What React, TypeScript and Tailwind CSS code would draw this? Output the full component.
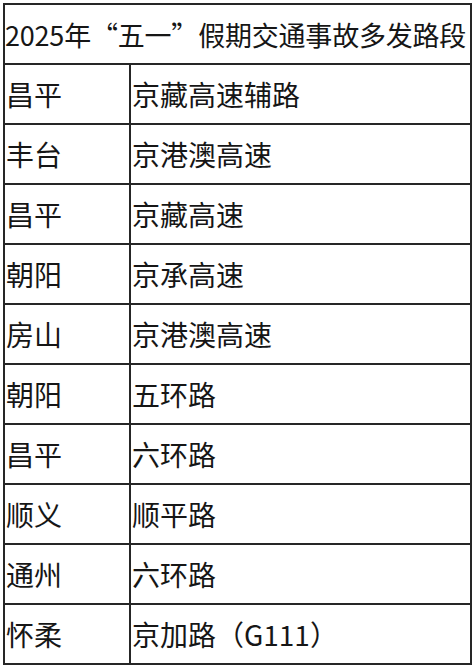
import React from "react";

const rows: [string, string][] = [
  ["昌平", "京藏高速辅路"],
  ["丰台", "京港澳高速"],
  ["昌平", "京藏高速"],
  ["朝阳", "京承高速"],
  ["房山", "京港澳高速"],
  ["朝阳", "五环路"],
  ["昌平", "六环路"],
  ["顺义", "顺平路"],
  ["通州", "六环路"],
  ["怀柔", "京加路（G111）"],
];

export default function App() {
  return (
    <div
      className="w-[476px] h-[666px] bg-white pt-[3px] pl-[3px] text-[#161616]"
      style={{ fontFamily: '"Noto Sans CJK SC", "Noto Sans", sans-serif' }}
    >
      <table className="w-[469px] border-collapse border-2 border-[#262626]">
        <thead>
          <tr className="h-[60px]">
            <th
              colSpan={2}
              className="border-2 border-[#262626] pl-0 text-left font-normal text-[27px] leading-none whitespace-nowrap tracking-[-0.2px]"
            >
              2025年“五一”假期交通事故多发路段
            </th>
          </tr>
        </thead>
        <tbody>
          {rows.map(([district, road], i) => (
            <tr key={i} className="h-[60px]">
              <td className="w-[126px] border-2 border-[#262626] pl-[1px] text-[28px] leading-none">
                {district}
              </td>
              <td className="border-2 border-[#262626] pl-[1px] text-[28px] leading-none">
                {road}
              </td>
            </tr>
          ))}
        </tbody>
      </table>
    </div>
  );
}
